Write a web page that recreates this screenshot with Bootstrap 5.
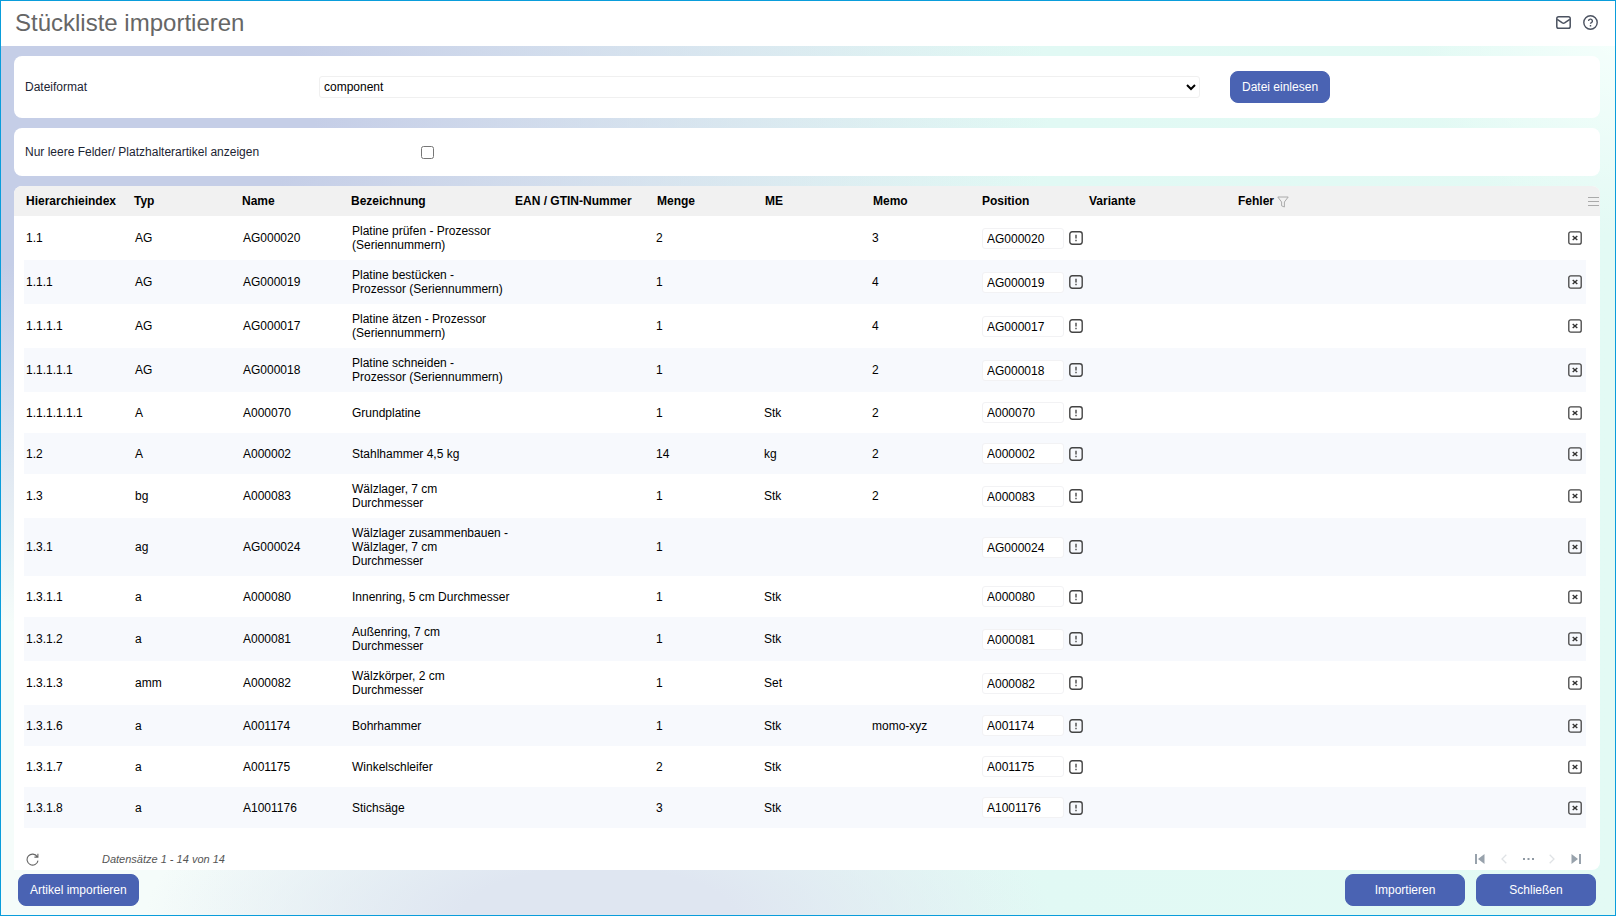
<!DOCTYPE html>
<html lang="de">
<head>
<meta charset="utf-8">
<meta name="viewport" content="width=device-width, initial-scale=1">
<title>Stückliste importieren</title>
<link href="https://cdn.jsdelivr.net/npm/bootstrap@5.3.0/dist/css/bootstrap.min.css" rel="stylesheet">
<style>
body{font-family:"Liberation Sans",Arial,sans-serif;font-size:12px;line-height:14px;color:#000;border:1px solid #0a9ddb;
background:
 radial-gradient(ellipse 12% 22% at 100% 4%,#f5fffc,#f5fffc00),
 radial-gradient(ellipse 28% 160px at 37% 100%,#dfe6f1 30%,#dfe6f100),
 radial-gradient(ellipse 65% 56% at 0 12%,#c5cee7 30%,#c5cee700 100%),
 linear-gradient(90deg,#f5fcfa 10%,#e1f9f4 65%,#e3faf4)}
.page-head{background:#fff;height:45px;padding:0 17px 2px 14px}
.page-head h1{font-size:24px;line-height:28px;color:#666}
main{padding:10px 15px 9px 13px}
.stack{gap:10px}
.panel{background:#fff;border-radius:8px}
.file-panel{height:62px}
.filter-panel{height:48px}
.grid-panel{border-bottom-left-radius:0}
.field-label{color:#1c2433}
.file-label{width:305px;padding-left:11px}
.filter-label{width:407px;padding-left:11px}
.file-action{width:400px;padding-left:30px}
.fmt{height:22px;border:1px solid #f0f0f0;border-radius:3px;background:#fff;color:#000;font-size:12px;padding:0}
.tick{width:13px;height:13px}
.btn-main{--bs-btn-color:#fff;--bs-btn-bg:#4a63b3;--bs-btn-border-color:#4a63b3;--bs-btn-hover-color:#fff;--bs-btn-hover-bg:#3e559f;--bs-btn-font-size:12px;--bs-btn-line-height:14px;--bs-btn-padding-x:11px;--bs-btn-padding-y:8px;--bs-btn-border-radius:8px}
.btn-wide{width:120px}
.parts{table-layout:fixed;width:100%}
.parts th{background:#f1f1f1;height:30px;padding:0 2px;white-space:nowrap;font-weight:700}
.parts thead th:first-child{border-top-left-radius:8px}
.parts thead th:last-child{border-top-right-radius:8px}
.parts td{height:41px;padding:8px 3px}
.parts td:nth-child(2){padding-left:2px}
.parts tbody tr:nth-child(even) td:not(.edge){background:#f7f9fd}
.parts td.edge,.parts th.edge{padding:0}
.parts th.menu{padding-left:2px}
.parts td.qty{padding-left:1px}
.parts td.act{padding:0 4px 0 0}
.parts td.pos{padding:0 0 0 2px}
.pos input{width:82px;height:21px;border:1px solid #f2f2f4;border-radius:3px;padding:1px 4px 0;font-size:12px;line-height:14px;color:#000;background:#fff}
.icon-btn{border:0;background:none;padding:0;display:inline-flex;align-items:center;justify-content:center;color:#333}
.pos .icon-btn{margin-left:5px}
.grid-foot{height:22px;padding:0 12px}
.count{font-size:11px;color:#555;margin-left:63px}
.pager .icon-btn{width:24px;height:16px}
.actions{gap:11px;padding:4px 4px 0}
</style>
</head>
<body class="min-vh-100 d-flex flex-column">
<svg class="d-none">
<symbol id="warn" viewBox="0 0 14 14"><rect x=".8" y=".8" width="12.4" height="12.4" rx="2.4" fill="none" stroke="#444" stroke-width="1.4"/><path d="M7 3.8v3.7M7 8.8v1.5" stroke="#555" stroke-width="1.5"/></symbol>
<symbol id="del" viewBox="0 0 14 14"><rect x=".8" y=".8" width="12.4" height="12.4" rx="2" fill="none" stroke="#444" stroke-width="1.3"/><path d="M4.7 4.9l4.6 4.2M9.3 4.9L4.7 9.1" stroke="#333" stroke-width="1.4"/></symbol>
</svg>
<header class="page-head d-flex align-items-center justify-content-between">
<h1 class="m-0 fw-normal">Stückliste importieren</h1>
<div class="d-flex gap-2 align-items-center">
<button class="icon-btn me-1" type="button" aria-label="Nachricht"><svg width="15" height="13" viewBox="0 0 15 13" fill="none" stroke="#4b5260" stroke-width="1.5"><rect x=".8" y=".8" width="13.4" height="11.4" rx="1.8"/><path d="M1.2 3.4l5.2 3.5q1.1.7 2.2 0l5.2-3.5"/></svg></button>
<button class="icon-btn" type="button" aria-label="Hilfe"><svg width="15" height="15" viewBox="0 0 15 15" fill="none" stroke="#4b5260" stroke-width="1.4"><circle cx="7.5" cy="7.5" r="6.7"/><path d="M5.6 6a1.9 1.9 0 1 1 2.8 1.7q-.9.4-.9 1.1M7.5 10v1.4"/></svg></button>
</div>
</header>
<main class="flex-grow-1 d-flex flex-column">
<div class="d-flex flex-column flex-grow-1 stack">
<section class="panel file-panel d-flex align-items-center">
<label class="field-label file-label" for="fmt">Dateiformat</label>
<select id="fmt" class="fmt flex-grow-1"><option>component</option></select>
<div class="file-action"><button class="btn btn-main" type="button">Datei einlesen</button></div>
</section>
<section class="panel filter-panel d-flex align-items-center">
<label class="field-label filter-label" for="empty">Nur leere Felder/ Platzhalterartikel anzeigen</label>
<input id="empty" type="checkbox" class="m-0 tick">
</section>
<section class="panel grid-panel flex-grow-1 d-flex flex-column">
<table class="parts">
<colgroup><col style="width:10px"><col style="width:108px"><col style="width:108px"><col style="width:109px"><col style="width:164px"><col style="width:142px"><col style="width:108px"><col style="width:108px"><col style="width:109px"><col style="width:107px"><col style="width:149px"><col><col style="width:14px"></colgroup>
<thead><tr><th class="edge"></th><th>Hierarchieindex</th><th>Typ</th><th>Name</th><th>Bezeichnung</th><th>EAN / GTIN-Nummer</th><th>Menge</th><th>ME</th><th>Memo</th><th>Position</th><th>Variante</th><th>Fehler <svg width="12" height="12" viewBox="0 0 12 12" fill="none" stroke="#aaa"><path d="M.8 1h10.4L7.4 6v5L4.6 9.8V6z"/></svg></th><th class="edge menu"><svg width="11" height="9" viewBox="0 0 11 9" stroke="#aaa"><path d="M0 .5h11M0 4.5h11M0 8.5h11"/></svg></th></tr></thead>
<tbody id="rows"></tbody>
</table>
<footer class="grid-foot d-flex align-items-center mt-auto">
<button class="icon-btn" type="button" aria-label="Aktualisieren"><svg width="13" height="13" viewBox="0 0 13 13" fill="none" stroke="#666" stroke-width="1.1"><path d="M11.2 3.6A5.5 5.5 0 1 0 12 7.6M11.9.8v3.3H8.4"/></svg></button>
<em class="count">Datensätze 1 - 14 von 14</em>
<nav class="pager d-flex align-items-center ms-auto" aria-label="Seiten">
<button class="icon-btn" type="button" aria-label="Erste"><svg width="10" height="10" viewBox="0 0 10 10" fill="#98a2ac"><path d="M0 0h2v10H0zM9.500 0v10L3 5z"/></svg></button>
<button class="icon-btn" type="button" aria-label="Zurück"><svg width="6" height="10" viewBox="0 0 6 10" fill="none" stroke="#dfe2e5" stroke-width="1.3"><path d="M5.300.7L1 5l4.300 4.300"/></svg></button>
<button class="icon-btn" type="button" aria-label="Mehr"><svg width="11" height="2" viewBox="0 0 11 2" fill="#8f99a3"><path d="M0 0h2v2H0zM4.500 0h2v2h-2zM9 0h2v2H9z"/></svg></button>
<button class="icon-btn" type="button" aria-label="Weiter"><svg width="6" height="10" viewBox="0 0 6 10" fill="none" stroke="#dfe2e5" stroke-width="1.3"><path d="M.7.7L5 5 .7 9.300"/></svg></button>
<button class="icon-btn" type="button" aria-label="Letzte"><svg width="10" height="10" viewBox="0 0 10 10" fill="#98a2ac"><path d="M8 0h2v10H8zM.5 0v10L7 5z"/></svg></button>
</nav>
</footer>
</section>
</div>
<div class="actions d-flex">
<button class="btn btn-main me-auto" type="button">Artikel importieren</button>
<button class="btn btn-main btn-wide" type="button">Importieren</button>
<button class="btn btn-main btn-wide" type="button">Schließen</button>
</div>
</main>
<script>
const data = [
["1.1","AG","AG000020","Platine prüfen - Prozessor (Seriennummern)","2","","3"],
["1.1.1","AG","AG000019","Platine bestücken - Prozessor (Seriennummern)","1","","4"],
["1.1.1.1","AG","AG000017","Platine ätzen - Prozessor (Seriennummern)","1","","4"],
["1.1.1.1.1","AG","AG000018","Platine schneiden - Prozessor (Seriennummern)","1","","2"],
["1.1.1.1.1.1","A","A000070","Grundplatine","1","Stk","2"],
["1.2","A","A000002","Stahlhammer 4,5 kg","14","kg","2"],
["1.3","bg","A000083","Wälzlager, 7 cm Durchmesser","1","Stk","2"],
["1.3.1","ag","AG000024","Wälzlager zusammenbauen - Wälzlager, 7 cm Durchmesser","1","",""],
["1.3.1.1","a","A000080","Innenring, 5 cm Durchmesser","1","Stk",""],
["1.3.1.2","a","A000081","Außenring, 7 cm Durchmesser","1","Stk",""],
["1.3.1.3","amm","A000082","Wälzkörper, 2 cm Durchmesser","1","Set",""],
["1.3.1.6","a","A001174","Bohrhammer","1","Stk","momo-xyz"],
["1.3.1.7","a","A001175","Winkelschleifer","2","Stk",""],
["1.3.1.8","a","A1001176","Stichsäge","3","Stk",""]];
document.getElementById("rows").innerHTML = data.map(([h,t,n,b,m,me,memo]) => `<tr><td class="edge"></td><td>${h}</td><td>${t}</td><td>${n}</td><td>${b}</td><td></td><td class="qty">${m}</td><td class="qty">${me}</td><td class="qty">${memo}</td><td class="pos"><div class="d-flex align-items-center"><input type="text" value="${n}" aria-label="Position ${h}"><button class="icon-btn" type="button" aria-label="Hinweis"><svg width="14" height="14"><use href="#warn"/></svg></button></div></td><td></td><td class="act"><div class="d-flex justify-content-end"><button class="icon-btn" type="button" aria-label="Entfernen"><svg width="14" height="14"><use href="#del"/></svg></button></div></td><td class="edge"></td></tr>`).join("");
</script>
<script src="https://cdn.jsdelivr.net/npm/bootstrap@5.3.0/dist/js/bootstrap.bundle.min.js"></script>
</body>
</html>
